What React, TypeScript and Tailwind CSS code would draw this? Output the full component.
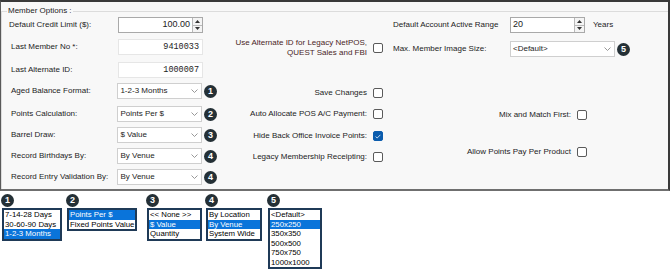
import React from 'react';

type Opt = { text: string; on?: boolean };

function Badge({ n }: { n: number }) {
  return (
    <span className="flex h-[13px] w-[13px] shrink-0 items-center justify-center rounded-full bg-[#243036] text-[9px] font-bold leading-none text-white">
      {n}
    </span>
  );
}

function Chevron() {
  return (
    <svg width="7" height="4" viewBox="0 0 7 4" className="shrink-0">
      <polyline points="0.5,0.5 3.5,3.5 6.5,0.5" fill="none" stroke="#8c8c8c" strokeWidth="0.9" />
    </svg>
  );
}

function Spinner() {
  return (
    <div className="flex h-full w-[10px] shrink-0 flex-col border-l border-[#b9b9b9] bg-[#f4f4f4]">
      <div className="flex flex-1 items-center justify-center border-b border-[#b9b9b9]">
        <svg width="5" height="3" viewBox="0 0 5 3">
          <polygon points="0,3 2.5,0 5,3" fill="#333" />
        </svg>
      </div>
      <div className="flex flex-1 items-center justify-center">
        <svg width="5" height="3" viewBox="0 0 5 3">
          <polygon points="0,0 5,0 2.5,3" fill="#333" />
        </svg>
      </div>
    </div>
  );
}

function Select({ value, width }: { value: string; width: string }) {
  return (
    <div className={`flex h-[16px] ${width} items-center justify-between border border-[#cfcfcf] bg-white pl-[2px] pr-[3px]`}>
      <span>{value}</span>
      <Chevron />
    </div>
  );
}

function Check({ on }: { on?: boolean }) {
  if (on) {
    return (
      <span className="flex h-[10px] w-[10px] shrink-0 items-center justify-center rounded-[2px] border border-[#0b5cad] bg-[#0b5cad]">
        <svg width="6" height="5" viewBox="0 0 6 5">
          <polyline points="0.6,2.6 2.2,4 5.4,0.8" fill="none" stroke="#dbe9f7" strokeWidth="0.9" />
        </svg>
      </span>
    );
  }
  return <span className="h-[10px] w-[10px] shrink-0 rounded-[2px] border border-[#5a5a5a] bg-white" />;
}

function ListBox({ items, width }: { items: Opt[]; width: string }) {
  return (
    <div className={`${width} overflow-hidden border-2 border-[#1f3a57] bg-white text-[7.8px]`}>
      {items.map((it) => (
        <div
          key={it.text}
          className={`h-[9.5px] pl-[1px] leading-[9.5px] whitespace-nowrap ${it.on ? 'bg-[#0a74da] text-white' : 'text-black'}`}
        >
          {it.text}
        </div>
      ))}
    </div>
  );
}

const lists: { n: number; ml: string; width: string; items: Opt[] }[] = [
  { n: 1, ml: 'ml-[2px]', width: 'w-[60px]', items: [{ text: '7-14-28 Days' }, { text: '30-60-90 Days' }, { text: '1-2-3 Months', on: true }] },
  { n: 2, ml: 'ml-[5px]', width: 'w-[70px]', items: [{ text: 'Points Per $', on: true }, { text: 'Fixed Points Value' }] },
  { n: 3, ml: 'ml-[10px]', width: 'w-[55px]', items: [{ text: '<< None >>' }, { text: '$ Value', on: true }, { text: 'Quantity' }] },
  { n: 4, ml: 'ml-[4px]', width: 'w-[56px]', items: [{ text: 'By Location' }, { text: 'By Venue', on: true }, { text: 'System Wide' }] },
  {
    n: 5,
    ml: 'ml-[6px]',
    width: 'w-[54px]',
    items: [{ text: '<Default>' }, { text: '250x250', on: true }, { text: '350x350' }, { text: '500x500' }, { text: '750x750' }, { text: '1000x1000' }],
  },
];

export default function App() {
  return (
    <div className="h-[271px] w-[670px] overflow-hidden bg-white font-['Liberation_Sans',Arial,sans-serif] text-[8px] text-[#1c1c1c]">
      {/* Member Options panel */}
      <div className="h-[191px] overflow-hidden border-t-2 border-r-2 border-l border-b-2 border-t-[#3a3a3a] border-r-[#3a3a3a] border-l-[#5a5a5a] border-b-[#6f6f6f] bg-[#f8f8f8]">
        <div className="mt-[9px] h-[200px] border-t border-l border-[#dcdcdc]">
          <div className="-mt-[6px] ml-[5px] w-fit bg-[#f8f8f8] px-[1px] leading-[10px]">Member Options :</div>
          <div className="flex">
            {/* left column */}
            <div className="flex w-[215px] flex-col pl-[7px]">
              <div className="mt-[1px] flex h-[16px] items-center">
                <span className="w-[109px]">Default Credit Limit ($):</span>
                <div className="flex h-[16px] w-[85px] items-center border border-[#a9a9a9] bg-white">
                  <span className="flex-1 pr-[2px] text-right text-[9px]">100.00</span>
                  <Spinner />
                </div>
              </div>
              <div className="mt-[6px] flex h-[16px] items-center">
                <span className="w-[109px] pl-[2px]">Last Member No *:</span>
                <div className="flex h-[16px] w-[85px] items-center justify-end border border-[#e6e6e6] bg-white pr-[3px] font-['Liberation_Mono',monospace] text-[8.5px]">
                  9410033
                </div>
              </div>
              <div className="mt-[7px] flex h-[16px] items-center">
                <span className="w-[109px] pl-[2px]">Last Alternate ID:</span>
                <div className="flex h-[16px] w-[85px] items-center justify-end border border-[#e6e6e6] bg-white pr-[3px] font-['Liberation_Mono',monospace] text-[8.5px]">
                  1000007
                </div>
              </div>
              <div className="mt-[5px] flex h-[16px] items-center">
                <span className="w-[109px] pl-[2px]">Aged Balance Format:</span>
                <Select value="1-2-3 Months" width="w-[85px]" />
                <span className="ml-[2px]"><Badge n={1} /></span>
              </div>
              <div className="mt-[7px] flex h-[16px] items-center">
                <span className="w-[109px] pl-[2px]">Points Calculation:</span>
                <Select value="Points Per $" width="w-[85px]" />
                <span className="ml-[2px]"><Badge n={2} /></span>
              </div>
              <div className="mt-[5px] flex h-[16px] items-center">
                <span className="w-[109px] pl-[2px]">Barrel Draw:</span>
                <Select value="$ Value" width="w-[85px]" />
                <span className="ml-[2px]"><Badge n={3} /></span>
              </div>
              <div className="mt-[5px] flex h-[16px] items-center">
                <span className="w-[109px] pl-[2px]">Record Birthdays By:</span>
                <Select value="By Venue" width="w-[85px]" />
                <span className="ml-[2px]"><Badge n={4} /></span>
              </div>
              <div className="mt-[5px] flex h-[16px] items-center">
                <span className="w-[109px] pl-[2px]">Record Entry Validation By:</span>
                <Select value="By Venue" width="w-[85px]" />
                <span className="ml-[2px]"><Badge n={4} /></span>
              </div>
            </div>

            {/* middle column */}
            <div className="flex w-[166px] flex-col">
              <div className="mt-[22px] flex h-[20px] items-center justify-end gap-[6px]">
                <span className="text-right leading-[10px] text-[#4a2626]">
                  Use Alternate ID for Legacy NetPOS,
                  <br />
                  QUEST Sales and FBI
                </span>
                <Check />
              </div>
              <div className="mt-[27px] flex h-[16px] items-center justify-end gap-[6px]">
                <span>Save Changes</span>
                <Check />
              </div>
              <div className="mt-[5px] flex h-[16px] items-center justify-end gap-[6px]">
                <span>Auto Allocate POS A/C Payment:</span>
                <Check />
              </div>
              <div className="mt-[6px] flex h-[16px] items-center justify-end gap-[6px]">
                <span>Hide Back Office Invoice Points:</span>
                <Check on />
              </div>
              <div className="mt-[5px] flex h-[16px] items-center justify-end gap-[6px]">
                <span>Legacy Membership Receipting:</span>
                <Check />
              </div>
            </div>

            {/* right column */}
            <div className="flex flex-col pl-[10px]">
              <div className="mt-[1px] flex h-[16px] items-center">
                <span className="w-[117px]">Default Account Active Range</span>
                <div className="flex h-[16px] w-[75px] items-center border border-[#a9a9a9] bg-white">
                  <span className="flex-1 pl-[2px] text-[9px]">20</span>
                  <Spinner />
                </div>
                <span className="ml-[8px]">Years</span>
              </div>
              <div className="mt-[8px] flex h-[16px] items-center">
                <span className="w-[117px]">Max. Member Image Size:</span>
                <Select value="<Default>" width="w-[105px]" />
                <span className="ml-[2px]"><Badge n={5} /></span>
              </div>
              <div className="mt-[50px] flex h-[16px] w-[194px] items-center justify-end gap-[6px]">
                <span>Mix and Match First:</span>
                <Check />
              </div>
              <div className="mt-[21px] flex h-[16px] w-[194px] items-center justify-end gap-[6px]">
                <span>Allow Points Pay Per Product</span>
                <Check />
              </div>
            </div>
          </div>
        </div>
      </div>

      {/* dropdown legend */}
      <div className="flex items-start pt-[3px]">
        {lists.map((l) => (
          <div key={l.n} className={`${l.ml} flex flex-col items-start`}>
            <span className="-ml-[1px]"><Badge n={l.n} /></span>
            <div className="mt-[1px]">
              <ListBox items={l.items} width={l.width} />
            </div>
          </div>
        ))}
      </div>
    </div>
  );
}
